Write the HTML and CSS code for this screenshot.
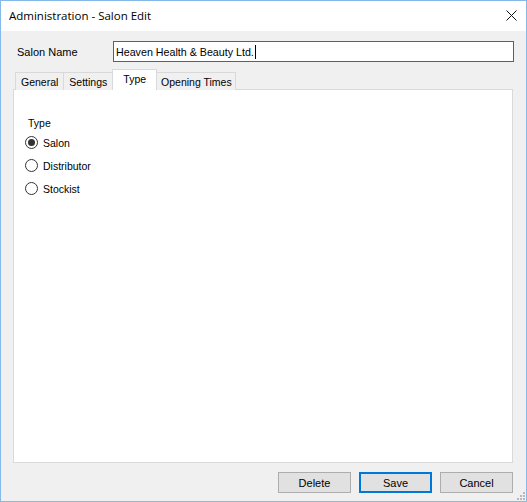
FILE: index.html
```html
<!DOCTYPE html>
<html>
<head>
<meta charset="utf-8">
<title>Administration - Salon Edit</title>
<link rel="stylesheet" href="styles.css">
</head>
<body>
<div class="window">
  <div class="titlebar">
    <span class="title">Administration - Salon Edit</span>
    <svg class="close" width="11" height="11" viewBox="0 0 11 11"><path d="M0.5 0.5 L10.5 10.5 M10.5 0.5 L0.5 10.5" stroke="#111" stroke-width="1" fill="none"/></svg>
  </div>
  <div class="body">
    <div class="name-row">
      <label class="name-label">Salon Name</label>
      <div class="input">Heaven Health &amp; Beauty Ltd.<span class="caret"></span></div>
    </div>
    <div class="tabs">
      <div class="tab">General</div>
      <div class="tab">Settings</div>
      <div class="tab active">Type</div>
      <div class="tab tight">Opening Times</div>
    </div>
    <div class="panel">
      <div class="group-label">Type</div>
      <div class="radio checked"><span class="dot"></span><span>Salon</span></div>
      <div class="radio"><span class="dot"></span><span>Distributor</span></div>
      <div class="radio"><span class="dot"></span><span>Stockist</span></div>
    </div>
    <div class="buttons">
      <div class="btn">Delete</div>
      <div class="btn default">Save</div>
      <div class="btn">Cancel</div>
    </div>
  </div>
  <svg class="grip" width="8" height="8" viewBox="0 0 8 8">
    <rect x="6" y="0" width="2" height="2" fill="#b8b8b8"/>
    <rect x="3" y="3" width="2" height="2" fill="#b8b8b8"/>
    <rect x="6" y="3" width="2" height="2" fill="#b8b8b8"/>
    <rect x="0" y="6" width="2" height="2" fill="#b8b8b8"/>
    <rect x="3" y="6" width="2" height="2" fill="#b8b8b8"/>
    <rect x="6" y="6" width="2" height="2" fill="#b8b8b8"/>
  </svg>
</div>
</body>
</html>
```
FILE: styles.css
```css
html, body {
  margin: 0;
  padding: 0;
  background: #f0f0f0;
}
.window {
  position: relative;
  width: 527px;
  height: 502px;
  box-sizing: border-box;
  border: 1px solid #85b9ea;
  background: #f0f0f0;
  display: flex;
  flex-direction: column;
  font-family: "Liberation Sans", Arial, sans-serif;
  font-size: 10.5px;
  color: #000;
}
.titlebar {
  height: 30px;
  background: #fff;
  display: flex;
  align-items: center;
  justify-content: space-between;
  padding: 0 9px 0 8px;
}
.title {
  font-family: "Open Sans", "Noto Sans", sans-serif;
  font-size: 11.5px;
  color: #000;
  margin-top: -1px;
}
.close {
  display: block;
  margin-top: -1px;
}
.body {
  flex: 1;
  display: flex;
  flex-direction: column;
  padding: 10px 13px 0 12px;
}
.name-row {
  display: flex;
  align-items: center;
  height: 21px;
}
.name-label {
  width: 100px;
  box-sizing: border-box;
  padding-left: 4px;
  font-size: 11px;
}
.input {
  flex: 1;
  height: 21px;
  box-sizing: border-box;
  border: 1px solid #0078d7;
  background: #fff;
  display: flex;
  align-items: center;
  padding-left: 2px;
  margin-right: -1px;
  font-size: 10.7px;
}
.caret {
  display: inline-block;
  width: 1px;
  height: 14px;
  background: #000;
  margin-left: 1px;
}
.tabs {
  display: flex;
  align-items: flex-end;
  margin-top: 8px;
  padding-left: 2px;
  height: 20px;
  position: relative;
  z-index: 1;
  margin-bottom: -1px;
}
.tab {
  height: 18px;
  box-sizing: border-box;
  border: 1px solid #d9d9d9;
  border-bottom: none;
  margin-left: -1px;
  padding: 0 5px 0 5px;
  display: flex;
  align-items: center;
  background: #f0f0f0;
}
.tab.tight {
  padding: 0 3px 0 4px;
}
.tab:first-child {
  margin-left: 0;
}
.tab.active {
  height: 21px;
  background: #fff;
  padding: 0 10px 3px 10px;
  margin-left: -1px;
  margin-right: -1px;
  position: relative;
  z-index: 2;
}
.tab.active + .tab {
  margin-left: 0;
}
.panel {
  height: 374px;
  box-sizing: border-box;
  border: 1px solid #d9d9d9;
  background: #fff;
  padding: 27px 0 0 11px;
}
.group-label {
  padding-left: 3px;
  height: 14px;
}
.radio {
  display: flex;
  align-items: center;
  height: 23px;
}
.radio .dot {
  width: 13px;
  height: 13px;
  box-sizing: border-box;
  border: 1px solid #333;
  border-radius: 50%;
  background: #fff;
  margin-right: 5px;
  position: relative;
}
.radio.checked .dot::after {
  content: "";
  position: absolute;
  left: 2px;
  top: 2px;
  width: 7px;
  height: 7px;
  border-radius: 50%;
  background: #333;
}
.buttons {
  display: flex;
  justify-content: flex-end;
  gap: 8px;
  margin-top: 9px;
}
.btn {
  width: 73px;
  height: 21px;
  box-sizing: border-box;
  border: 1px solid #adadad;
  background: #e1e1e1;
  display: flex;
  align-items: center;
  justify-content: center;
  font-size: 11px;
}
.btn.default {
  border: 2px solid #0078d7;
}
.grip {
  position: absolute;
  right: 1px;
  bottom: 1px;
}
```
